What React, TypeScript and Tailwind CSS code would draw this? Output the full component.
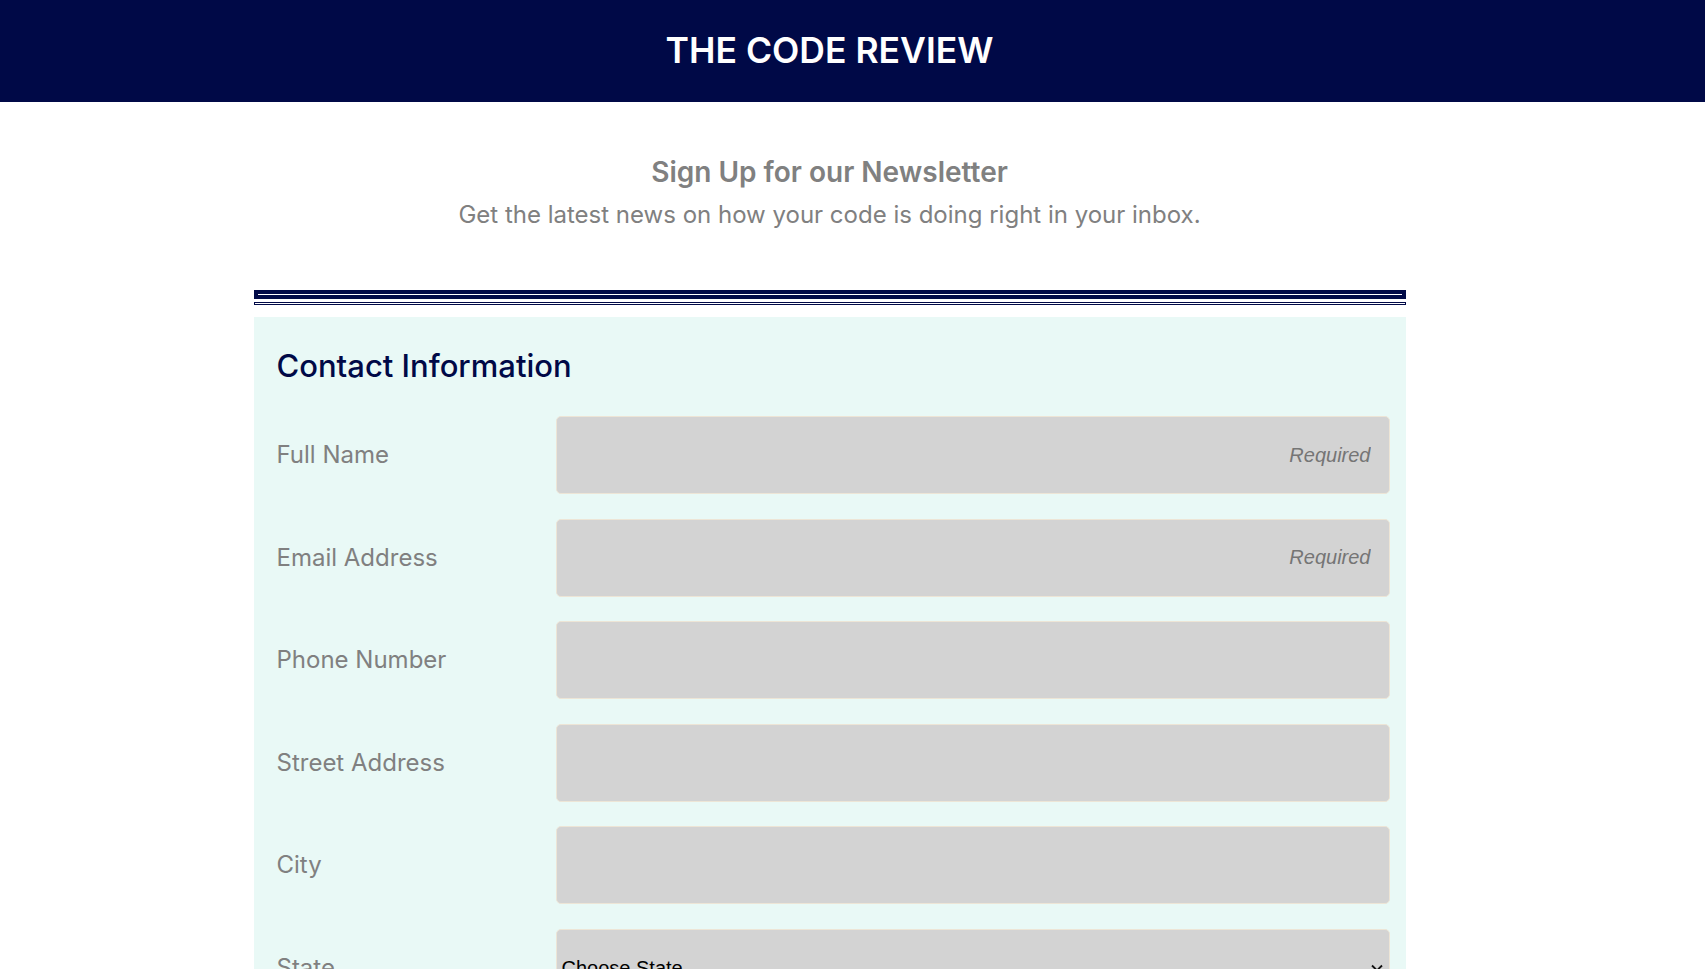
import React from 'react';

const fields = [
  { label: 'Full Name', required: true },
  { label: 'Email Address', required: true },
  { label: 'Phone Number', required: false },
  { label: 'Street Address', required: false },
  { label: 'City', required: false },
];

const FieldRow: React.FC<{ label: string; required?: boolean }> = ({ label, required }) => (
  <div className="flex items-center">
    <label className="w-[279px] shrink-0 text-[24px] leading-[28px] text-[#808080]">{label}</label>
    <input
      type="text"
      placeholder={required ? 'Required' : ''}
      className="h-[78px] w-[834px] rounded-[5px] border border-[#ede5d6] bg-[#d3d3d3] px-[18px] text-right font-['Liberation_Sans',Arial,sans-serif] text-[20px] placeholder:italic placeholder:text-[#757575] outline-none"
    />
  </div>
);

export default function App() {
  return (
    <div className="min-h-screen bg-white font-['Inter',sans-serif]">
      <header className="flex h-[102px] items-center justify-center bg-[#000947] pr-[46px]">
        <h1 className="text-[35.5px] leading-[44px] font-semibold text-white -mt-[1px]">THE CODE REVIEW</h1>
      </header>

      <main className="pr-[46px]">
        <div className="mx-auto w-[1152px]">
          <div className="pt-[53px] text-center">
            <h2 className="text-[28px] leading-[34px] font-semibold text-[#808080]">Sign Up for our Newsletter</h2>
            <p className="mt-[11px] text-[24px] leading-[30px] text-[#808080]">
              Get the latest news on how your code is doing right in your inbox.
            </p>
          </div>

          <div className="mt-[60px] h-[9px] border-4 border-[#000947] bg-white" />
          <div className="mt-[3px] h-[3px] border border-[#000947] bg-white" />

          <section className="mt-[12px] bg-[#e9f9f6] pl-[23px] pr-[16px] pt-[29px] pb-[40px]">
            <h3 className="text-[31px] leading-[40px] font-medium text-[#000947]">Contact Information</h3>
            <div className="mt-[30px] flex flex-col gap-[24.5px]">
              {fields.map((f) => (
                <FieldRow key={f.label} label={f.label} required={f.required} />
              ))}
              <div className="flex items-center">
                <label className="w-[279px] shrink-0 text-[24px] leading-[28px] text-[#808080]">State</label>
                <div className="relative w-[834px]">
                  <select className="h-[78px] w-full appearance-none rounded-[5px] border border-[#ede5d6] bg-[#d3d3d3] pl-[5px] font-['Liberation_Sans',Arial,sans-serif] text-[20px] text-black outline-none">
                    <option>Choose State</option>
                    <option>Alabama</option>
                    <option>Alaska</option>
                  </select>
                  <svg
                    className="pointer-events-none absolute right-[7px] top-1/2 -translate-y-1/2"
                    width="12"
                    height="8"
                    viewBox="0 0 12 8"
                    fill="none"
                  >
                    <path d="M1 1.5l5 5 5-5" stroke="#111" strokeWidth="1.8" />
                  </svg>
                </div>
              </div>
            </div>
          </section>
        </div>
      </main>
    </div>
  );
}
